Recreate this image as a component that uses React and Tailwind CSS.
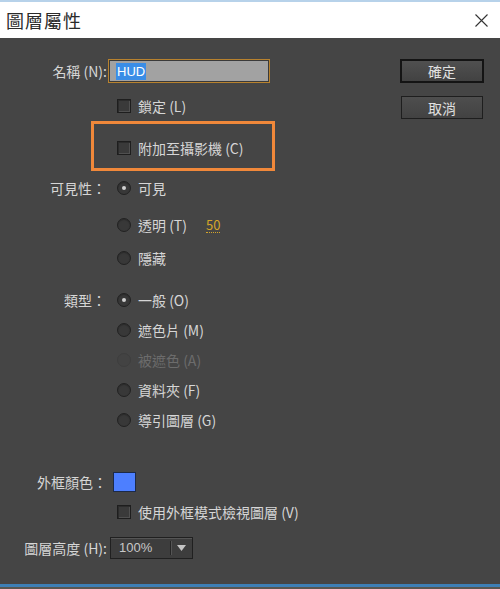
import React from "react";

const font = { fontFamily: '"Noto Sans CJK TC", "Noto Sans", sans-serif' };

const Check = () => (
  <span className="inline-block w-[14px] h-[14px] border border-[#1e1e1e] bg-[#3a3a3a] shadow-[inset_1px_1px_0_#2c2c2c,inset_-1px_-1px_0_#505050] shrink-0" />
);

const Radio = ({ on, disabled }) => (
  <span
    className={`flex items-center justify-center w-[14px] h-[14px] rounded-full shrink-0 ${
      disabled
        ? "border border-[#3e3e3e] bg-[#434343]"
        : "border border-[#222] bg-[#383838] shadow-[inset_0_1px_1px_#2a2a2a]"
    }`}
  >
    {on && <span className="w-[4px] h-[4px] rounded-full bg-[#d0d0d0]" />}
  </span>
);

const Row = ({ label, children, className = "" }) => (
  <div className={`flex items-center h-[20px] ${className}`}>
    <div className="w-[107px] text-right pr-[1px]">{label}</div>
    <div className="flex items-center gap-[7px] pl-[10px]">{children}</div>
  </div>
);

export default function App() {
  return (
    <div className="w-[500px] h-[589px] flex flex-col bg-[#454545] text-[14px] text-[#d6d6d6] overflow-hidden" style={font}>
      {/* title bar */}
      <div className="h-[2px] bg-[#b7d2ea]" />
      <div className="h-[36px] bg-white flex items-center justify-between pl-[6px] pr-[11px]">
        <span className="text-[18px] text-[#2a2a2a] tracking-[1px]">圖層屬性</span>
        <svg width="13" height="13" viewBox="0 0 13 13" className="mr-[1px]">
          <path d="M0.5 0.5L12.5 12.5M12.5 0.5L0.5 12.5" stroke="#333" strokeWidth="1.1" />
        </svg>
      </div>

      <div className="flex flex-1">
        {/* left form */}
        <div className="flex flex-col pt-[21px]">
          <div className="flex items-center h-[24px]">
            <div className="w-[107px] text-right">名稱 (N):</div>
            <div className="ml-[1px] w-[162px] h-[24px] border border-[#b8822e] bg-[#a2a2a2] shadow-[inset_0_0_0_1px_#3a3a3a] flex items-center pl-[7px]">
              <span className="bg-[#3a8de6] text-white text-[13px] leading-[17px] px-[1px]" style={{ fontFamily: '"Liberation Sans", Arial, sans-serif' }}>
                HUD
              </span>
            </div>
          </div>

          <Row className="mt-[13px]">
            <Check />
            <span>鎖定 (L)</span>
          </Row>

          <div className="mt-[5px] ml-[91px] w-[184px] h-[50px] border-[3px] border-[#f0883a] flex items-center pt-[4px] pl-[23px] gap-[7px]">
            <Check />
            <span>附加至攝影機 (C)</span>
          </div>

          <Row label="可見性：" className="mt-[7px]">
            <Radio on />
            <span>可見</span>
          </Row>
          <Row className="mt-[17px]">
            <Radio />
            <span>透明 (T)</span>
            <span className="ml-[12px] text-[#d4a52a] border-b border-dotted border-[#d4a52a] leading-[15px] text-[13px]">50</span>
          </Row>
          <Row className="mt-[13px]">
            <Radio />
            <span>隱藏</span>
          </Row>

          <Row label="類型：" className="mt-[22px]">
            <Radio on />
            <span>一般 (O)</span>
          </Row>
          <Row className="mt-[10px]">
            <Radio />
            <span>遮色片 (M)</span>
          </Row>
          <Row className="mt-[10px] text-[#6c6c6c]">
            <Radio disabled />
            <span>被遮色 (A)</span>
          </Row>
          <Row className="mt-[10px]">
            <Radio />
            <span>資料夾 (F)</span>
          </Row>
          <Row className="mt-[10px]">
            <Radio />
            <span>導引圖層 (G)</span>
          </Row>

          <div className="flex items-center h-[20px] mt-[42px]">
            <div className="w-[107px] text-right">外框顏色：</div>
            <span className="ml-[6px] w-[23px] h-[20px] bg-[#4d7fff] border border-[#1c2a48]" />
          </div>

          <Row className="mt-[10px]">
            <Check />
            <span>使用外框模式檢視圖層 (V)</span>
          </Row>

          <div className="flex items-center h-[22px] mt-[15px]">
            <div className="w-[107px] text-right">圖層高度 (H):</div>
            <div className="ml-[3px] w-[83px] h-[22px] border border-[#202020] bg-[#3d3d3d] shadow-[inset_0_1px_0_#555] flex items-center">
              <span className="flex-1 pl-[8px] text-[13px] text-[#c8c8c8]" style={{ fontFamily: '"Liberation Sans", Arial, sans-serif' }}>100%</span>
              <span className="w-[1px] h-[14px] bg-[#262626] shadow-[1px_0_0_#555]" />
              <span className="w-[21px] flex justify-center">
                <svg width="9" height="6" viewBox="0 0 9 6">
                  <path d="M0 0H9L4.5 6Z" fill="#c4c4c4" />
                </svg>
              </span>
            </div>
          </div>
        </div>

        {/* buttons */}
        <div className="ml-auto mr-[16px] pt-[21px] flex flex-col items-center">
          <button className="w-[84px] h-[24px] border-2 border-[#141414] bg-gradient-to-b from-[#505050] to-[#424242] text-[#e0e0e0] leading-none">
            確定
          </button>
          <button className="mt-[13px] w-[82px] h-[23px] border border-[#1e1e1e] bg-gradient-to-b from-[#4e4e4e] to-[#424242] text-[#e0e0e0] leading-none">
            取消
          </button>
        </div>
      </div>

      <div className="h-[3px] bg-[#3d7fb5]" />
      <div className="h-[2px] bg-[#5a5650]" />
    </div>
  );
}
